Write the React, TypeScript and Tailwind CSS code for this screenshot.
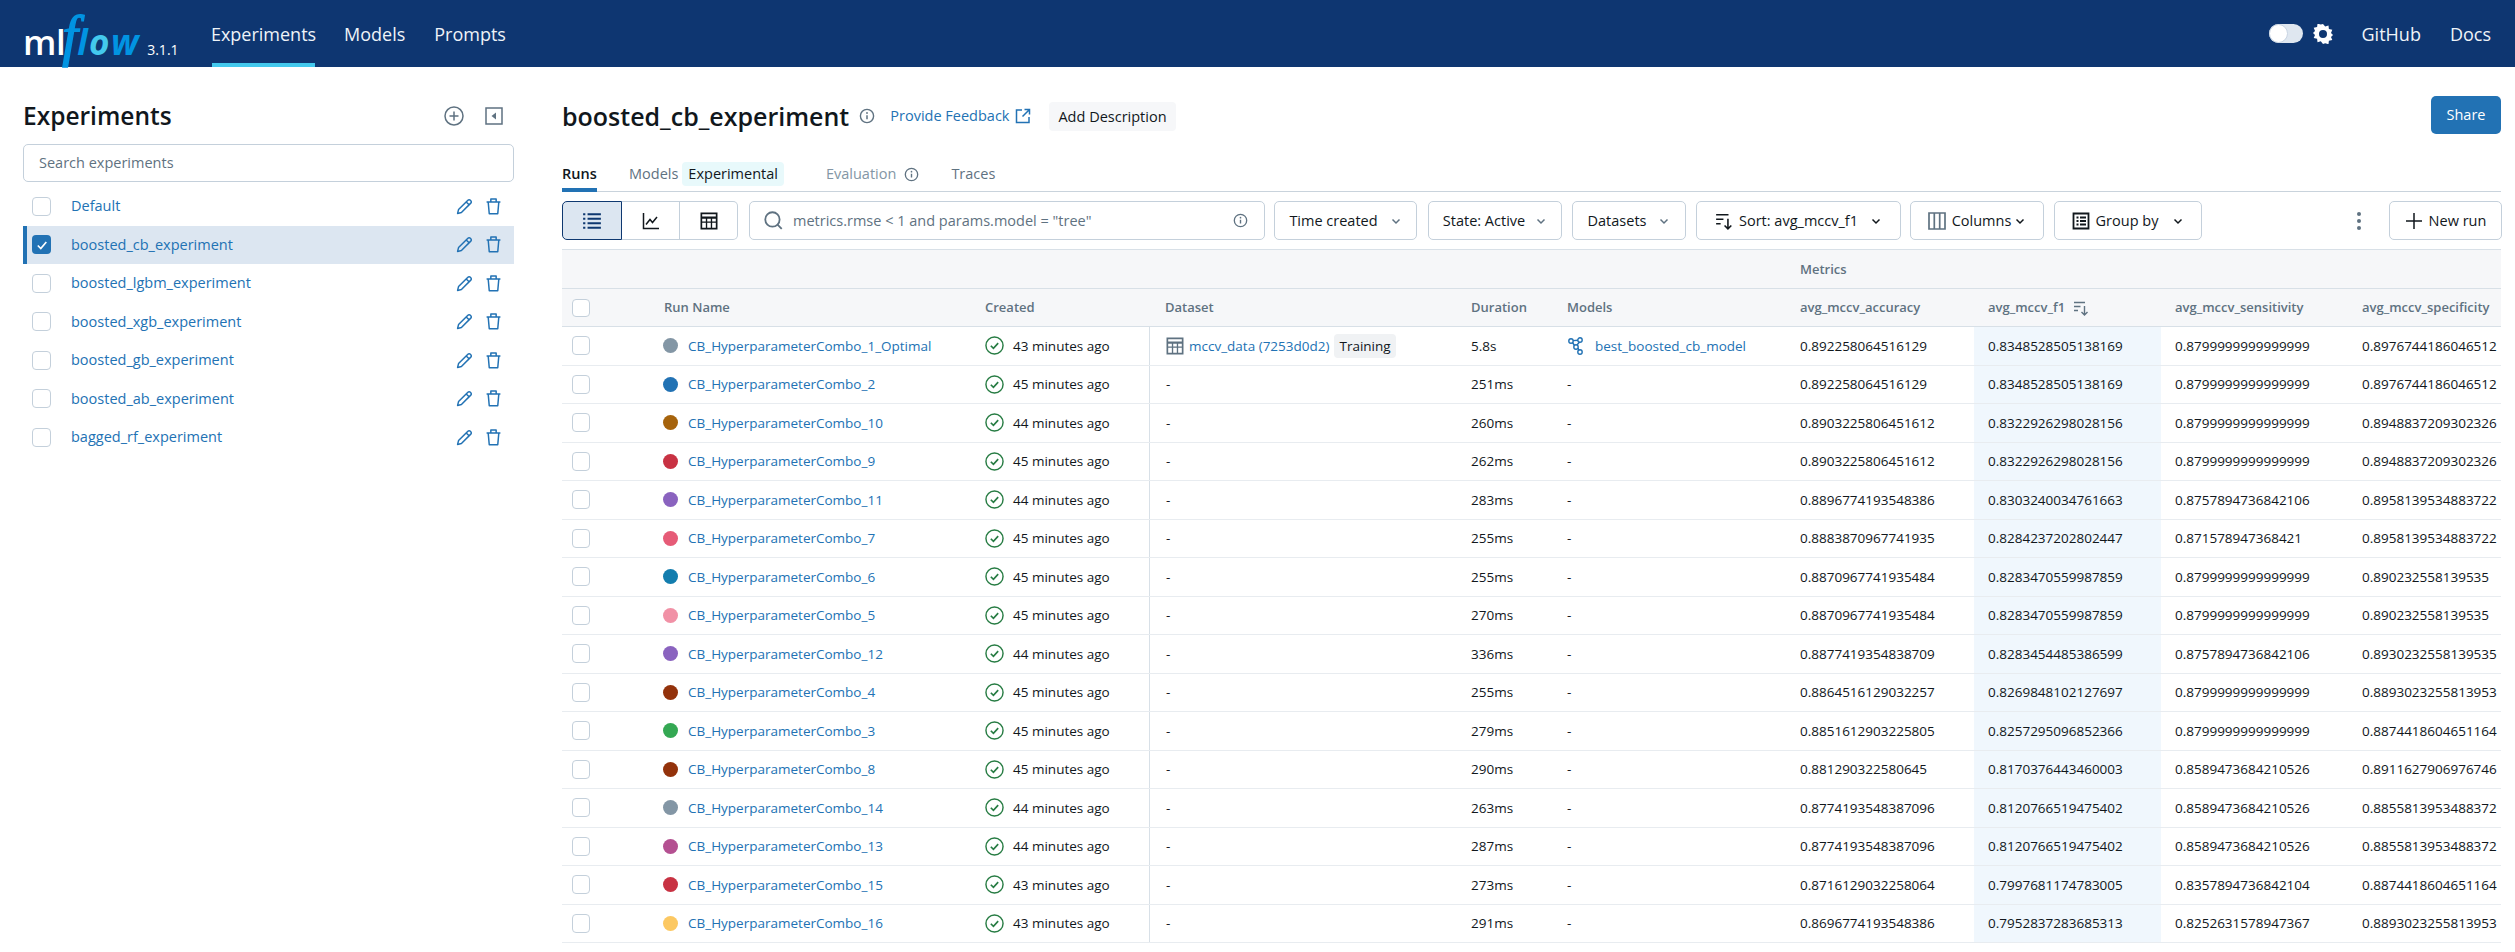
import React from "react";

const F = "font-['Open_Sans','Noto_Sans',sans-serif]";

type P = { className?: string };
const Info = ({ className = "" }: P) => (
  <svg viewBox="0 0 16 16" className={className} fill="none" stroke="currentColor" strokeWidth="1.4">
    <circle cx="8" cy="8" r="6.6" />
    <path d="M8 7.2v4" strokeWidth="1.5" />
    <circle cx="8" cy="5" r="0.9" fill="currentColor" stroke="none" />
  </svg>
);
const Pencil = () => (
  <svg viewBox="0 0 16 16" className="w-[17px] h-[17px] text-[#2272b4]" fill="none" stroke="currentColor" strokeWidth="1.4" strokeLinejoin="round">
    <path d="M1.5 14.5l.9-3.6L11.2 2.1a1.6 1.6 0 012.3 0l.4.4a1.6 1.6 0 010 2.3L5.1 13.6z" />
    <path d="M9.6 3.7l2.7 2.7" />
  </svg>
);
const Trash = () => (
  <svg viewBox="0 0 16 16" className="w-[17px] h-[17px] text-[#2272b4]" fill="none" stroke="currentColor" strokeWidth="1.4" strokeLinejoin="round">
    <path d="M1.5 3.8h13M5.5 3.8V1h5v2.8M3 3.8l1 11h8l1-11" />
  </svg>
);
const Check = () => (
  <svg viewBox="0 0 16 16" className="w-[19px] h-[19px] text-[#277c43] shrink-0" fill="none" stroke="currentColor" strokeWidth="1.2">
    <circle cx="8" cy="8" r="7.2" />
    <path d="M4.9 8.2l2.2 2.2 4-4.4" strokeWidth="1.4" />
  </svg>
);
const Chevron = ({ className = "" }: P) => (
  <svg viewBox="0 0 12 12" className={className} fill="none" stroke="currentColor" strokeWidth="1.5">
    <path d="M2.5 4.5L6 8l3.5-3.5" />
  </svg>
);
const SortIcon = ({ className = "" }: P) => (
  <svg viewBox="0 0 16 16" className={className} fill="none" stroke="currentColor" strokeWidth="1.4">
    <path d="M1 2.5h11M1 6.5h6.5M1 10.5h4M11.5 6v9M8.5 12l3 3 3-3" />
  </svg>
);
const TableIcon = ({ className = "" }: P) => (
  <svg viewBox="0 0 16 16" className={className} fill="none" stroke="currentColor" strokeWidth="1.5">
    <path d="M1.2 1.2h13.6v13.6H1.2z" />
    <path d="M1.2 5h13.6" strokeWidth="2" />
    <path d="M5.8 5v9.5M10.2 5v9.5M1.2 9h13.6" strokeWidth="1.2" />
  </svg>
);

const Logo = () => (
  <div className="flex items-baseline select-none leading-none whitespace-nowrap w-[159px] mt-[4px]">
    <span className="font-['Open_Sans',sans-serif] font-semibold text-[35px] text-white tracking-[-0.5px]">ml</span>
    <span className="font-['Open_Sans',sans-serif] italic font-bold text-[35px] text-[#0194e2] tracking-[1.5px]">
      <span className="font-['Liberation_Serif',serif] font-normal text-[56px] [-webkit-text-stroke:1.4px_#0194e2] ml-[-3px] mr-[-2px]">f</span>
      l<span className="text-[#43c9ed]">o</span>w
    </span>
    <span className={`${F} text-[14px] text-white ml-[7px] not-italic`}>3.1.1</span>
  </div>
);

const Header = () => (
  <header className={`${F} h-[67px] bg-[#0e3671] flex items-center pl-[23px] pr-[24px] text-[#eef3f8] text-[18px]`}>
    <Logo />
    <nav className="flex h-full ml-[30px] gap-[29px] items-center">
      <a className="h-full flex items-center border-b-4 border-[#43c9ed] pt-[5px] w-[103px] justify-center">Experiments</a>
      <a className="mt-[1px]">Models</a>
      <a className="mt-[1px]">Prompts</a>
    </nav>
    <div className="ml-auto flex items-center">
      <div className="w-[34px] h-[19px] rounded-full bg-[#dfe7f0] flex items-center">
        <div className="w-[19px] h-[19px] rounded-full bg-white border border-[#c8d4e2]" />
      </div>
      <svg viewBox="0 0 20 20" className="w-[20px] h-[20px] ml-[10px] text-white" fill="currentColor">
        <path fillRule="evenodd" d="M10 0l2.2 2.6 3.3-1 .4 3.5 3.4 .7-1.3 3.2 2 2-2 2 1.3 3-3.4.7-.4 3.5-3.3-1L10 20l-2.2-2.8-3.3 1-.4-3.5-3.4-.7 1.3-3-2-2 2-2-1.3-3.2 3.4-.7.4-3.5 3.3 1zM10 6a4 4 0 100 8 4 4 0 000-8z" />
      </svg>
      <a className="ml-[29px] mt-[1px]">GitHub</a>
      <a className="ml-[29px] mt-[1px]">Docs</a>
    </div>
  </header>
);

const experiments = [
  "Default",
  "boosted_cb_experiment",
  "boosted_lgbm_experiment",
  "boosted_xgb_experiment",
  "boosted_gb_experiment",
  "boosted_ab_experiment",
  "bagged_rf_experiment",
];

const Sidebar = () => (
  <aside className="w-[562px] shrink-0 pl-[23px] pr-[48px]">
    <div className="h-[77px] pt-[29px] flex items-start">
      <h1 className="text-[24.5px] leading-[40px] font-semibold text-[#11171c]">Experiments</h1>
      <div className="ml-auto flex items-center h-[40px] text-[#5f7281] pr-[11px]">
        <svg viewBox="0 0 20 20" className="w-[20px] h-[20px]" fill="none" stroke="currentColor" strokeWidth="1.5">
          <circle cx="10" cy="10" r="9" />
          <path d="M10 5.5v9M5.5 10h9" />
        </svg>
        <svg viewBox="0 0 18 18" className="w-[18px] h-[18px] ml-[21px]" fill="none" stroke="currentColor" strokeWidth="1.5">
          <path d="M1 1h16v16H1z" />
          <path d="M11 5.5v7L6.5 9z" fill="currentColor" stroke="none" />
        </svg>
      </div>
    </div>
    <div className="h-[38px] w-[491px] border border-[#c4d0db] rounded-[5px] flex items-center px-[15px] text-[14.5px] text-[#5f7281]">
      Search experiments
    </div>
    <ul className="mt-[5px] w-[491px]">
      {experiments.map((e, i) => (
        <li
          key={e}
          className={`h-[38.5px] flex items-center ${i === 1 ? "bg-[#dce6f1] border-l-4 border-[#2272b4] pl-[5px]" : "pl-[9px]"}`}
        >
          {i === 1 ? (
            <div className="w-[19px] h-[19px] rounded-[4px] bg-[#2272b4] flex items-center justify-center">
              <svg viewBox="0 0 12 12" className="w-[12px] h-[12px]" fill="none" stroke="white" strokeWidth="1.7">
                <path d="M1.8 6.5l3 3 5.5-6.5" />
              </svg>
            </div>
          ) : (
            <div className="w-[19px] h-[19px] rounded-[4px] border border-[#c4d0db] bg-white" />
          )}
          <span className="ml-[20px] text-[14.5px] text-[#2272b4]">{e}</span>
          <span className="ml-auto flex items-center gap-[12px] pr-[12px]">
            <Pencil />
            <Trash />
          </span>
        </li>
      ))}
    </ul>
  </aside>
);

const Btn = ({ w, children, ml = "ml-[10px]" }: { w: string; children: React.ReactNode; ml?: string }) => (
  <div className={`${w} ${ml} h-[39px] shrink-0 border border-[#c4d0db] rounded-[5px] flex items-center justify-center text-[14.5px] text-[#11171c] whitespace-nowrap`}>
    {children}
  </div>
);

const Toolbar = () => (
  <div className="flex items-center mt-[9px] h-[39px]">
    <div className="flex h-[39px] w-[176px] shrink-0">
      <div className="w-[60px] bg-[#dce6f1] border border-[#0e3870] rounded-l-[5px] flex items-center justify-center text-[#0e3870]">
        <svg viewBox="0 0 18 18" className="w-[20px] h-[20px]" fill="none" stroke="currentColor" strokeWidth="1.8">
          <path d="M1 3h2M5 3h12M1 7h2M5 7h12M1 11h2M5 11h12M1 15h2M5 15h12" />
        </svg>
      </div>
      <div className="w-[58px] border-y border-r border-[#c4d0db] flex items-center justify-center text-[#11171c]">
        <svg viewBox="0 0 18 18" className="w-[18px] h-[18px]" fill="none" stroke="currentColor" strokeWidth="1.5">
          <path d="M1.5 1v15.5H17" />
          <path d="M4 12.5l4-5 2.5 3L15 5" />
        </svg>
      </div>
      <div className="w-[58px] border-y border-r border-[#c4d0db] rounded-r-[5px] flex items-center justify-center text-[#11171c]">
        <TableIcon className="w-[18px] h-[18px]" />
      </div>
    </div>
    <div className="ml-[11px] w-[516px] h-[39px] shrink-0 border border-[#c4d0db] rounded-[5px] flex items-center pl-[14px] pr-[16px] text-[14.5px] text-[#5f7281]">
      <svg viewBox="0 0 18 18" className="w-[19px] h-[19px] shrink-0" fill="none" stroke="currentColor" strokeWidth="1.7">
        <circle cx="8" cy="8" r="6.8" />
        <path d="M12.8 12.8l4 4.2" />
      </svg>
      <span className="ml-[10px]">metrics.rmse &lt; 1 and params.model = "tree"</span>
      <Info className="w-[15px] h-[15px] ml-auto" />
    </div>
    <Btn w="w-[143px]" ml="ml-[9px]">Time created<Chevron className="w-[12px] h-[12px] ml-[12px] text-[#5f7281]" /></Btn>
    <Btn w="w-[134px]" ml="ml-[11px]">State: Active<Chevron className="w-[12px] h-[12px] ml-[10px] text-[#5f7281]" /></Btn>
    <Btn w="w-[114px]">Datasets<Chevron className="w-[12px] h-[12px] ml-[12px] text-[#5f7281]" /></Btn>
    <Btn w="w-[205px]"><SortIcon className="w-[18px] h-[18px] mr-[6px]" />Sort: avg_mccv_f1<Chevron className="w-[12px] h-[12px] ml-[12px]" /></Btn>
    <Btn w="w-[134px]" ml="ml-[9px]">
      <svg viewBox="0 0 18 18" className="w-[18px] h-[18px] mr-[6px] text-[#5f7281]" fill="none" stroke="currentColor" strokeWidth="1.7">
        <path d="M1 1h16v16H1zM6.3 1v16M11.7 1v16" />
      </svg>
      Columns<Chevron className="w-[12px] h-[12px] ml-[3px]" />
    </Btn>
    <Btn w="w-[148px]">
      <svg viewBox="0 0 18 18" className="w-[18px] h-[18px] mr-[6px]" fill="none" stroke="currentColor" strokeWidth="1.8">
        <path d="M1.5 1.5h15v15h-15zM4.5 5.5h2M8 5.5h6M4.5 9h2M8 9h6M4.5 12.5h2M8 12.5h6" />
      </svg>
      Group by<Chevron className="w-[12px] h-[12px] ml-[14px]" />
    </Btn>
    <div className="w-[187px] shrink-0 flex items-center justify-end pr-[28px]">
      <div className="flex flex-col gap-[3px]">
        <div className="w-[4px] h-[4px] rounded-full bg-[#5f7281]" />
        <div className="w-[4px] h-[4px] rounded-full bg-[#5f7281]" />
        <div className="w-[4px] h-[4px] rounded-full bg-[#5f7281]" />
      </div>
    </div>
    <Btn w="w-[113px]" ml="">
      <svg viewBox="0 0 18 18" className="w-[18px] h-[18px] mr-[6px]" fill="none" stroke="currentColor" strokeWidth="1.5">
        <path d="M9 1v16M1 9h16" />
      </svg>
      New run
    </Btn>
  </div>
);

type Run = [string, string, string, string, string, string, string, string];
const runs: Run[] = [
  ["1_Optimal", "#8396a5", "43", "5.8s", "0.892258064516129", "0.8348528505138169", "0.8799999999999999", "0.8976744186046512"],
  ["2", "#2272b4", "45", "251ms", "0.892258064516129", "0.8348528505138169", "0.8799999999999999", "0.8976744186046512"],
  ["10", "#a6630c", "44", "260ms", "0.8903225806451612", "0.8322926298028156", "0.8799999999999999", "0.8948837209302326"],
  ["9", "#c83243", "45", "262ms", "0.8903225806451612", "0.8322926298028156", "0.8799999999999999", "0.8948837209302326"],
  ["11", "#8a63bf", "44", "283ms", "0.8896774193548386", "0.8303240034761663", "0.8757894736842106", "0.8958139534883722"],
  ["7", "#e65b77", "45", "255ms", "0.8883870967741935", "0.8284237202802447", "0.871578947368421", "0.8958139534883722"],
  ["6", "#137dae", "45", "255ms", "0.8870967741935484", "0.8283470559987859", "0.8799999999999999", "0.890232558139535"],
  ["5", "#f191a6", "45", "270ms", "0.8870967741935484", "0.8283470559987859", "0.8799999999999999", "0.890232558139535"],
  ["12", "#8a63bf", "44", "336ms", "0.8877419354838709", "0.8283454485386599", "0.8757894736842106", "0.8930232558139535"],
  ["4", "#93320b", "45", "255ms", "0.8864516129032257", "0.8269848102127697", "0.8799999999999999", "0.8893023255813953"],
  ["3", "#34a853", "45", "279ms", "0.8851612903225805", "0.8257295096852366", "0.8799999999999999", "0.8874418604651164"],
  ["8", "#93320b", "45", "290ms", "0.881290322580645", "0.8170376443460003", "0.8589473684210526", "0.8911627906976746"],
  ["14", "#8396a5", "44", "263ms", "0.8774193548387096", "0.8120766519475402", "0.8589473684210526", "0.8855813953488372"],
  ["13", "#b45091", "44", "287ms", "0.8774193548387096", "0.8120766519475402", "0.8589473684210526", "0.8855813953488372"],
  ["15", "#c83243", "43", "273ms", "0.8716129032258064", "0.7997681174783005", "0.8357894736842104", "0.8874418604651164"],
  ["16", "#fcc862", "43", "291ms", "0.8696774193548386", "0.7952837283685313", "0.8252631578947367", "0.8893023255813953"],
];

const Table = () => (
  <div className="mt-[9px] w-[1939px] text-[13.5px]">
    <div className="bg-[#f6f7f9] border-y border-[#d8e0e7] h-[40px] flex items-center pt-[2px]">
      <div className="w-[1238px] shrink-0" />
      <span className="text-[#5f7281] font-semibold text-[13px]">Metrics</span>
    </div>
    <div className="bg-[#f6f7f9] border-b border-[#d8e0e7] h-[38px] flex items-center text-[#5f7281] font-semibold text-[13px] pt-[1px]">
      <div className="w-[102px] shrink-0 pl-[10px]">
        <div className="w-[18px] h-[18px] rounded-[4px] border border-[#c4d0db] bg-white" />
      </div>
      <div className="w-[321px] shrink-0">Run Name</div>
      <div className="w-[180px] shrink-0">Created</div>
      <div className="w-[306px] shrink-0">Dataset</div>
      <div className="w-[96px] shrink-0">Duration</div>
      <div className="w-[233px] shrink-0">Models</div>
      <div className="w-[188px] shrink-0">avg_mccv_accuracy</div>
      <div className="w-[187px] shrink-0 flex items-center">avg_mccv_f1<SortIcon className="w-[16px] h-[16px] ml-[8px]" /></div>
      <div className="w-[187px] shrink-0">avg_mccv_sensitivity</div>
      <div className="shrink-0 whitespace-nowrap">avg_mccv_specificity</div>
    </div>
    {runs.map((r, i) => (
      <div key={r[0]} className="h-[38.5px] flex items-stretch border-b border-[#e8ecf0] text-[#11171c]">
        <div className="w-[102px] shrink-0 pl-[10px] flex items-center">
          <div className="w-[18px] h-[19px] rounded-[4px] border border-[#c4d0db] bg-white" />
        </div>
        <div className="w-[321px] shrink-0 flex items-center ml-[-1px] mr-[1px]">
          <span className="w-[15px] h-[15px] rounded-full shrink-0" style={{ backgroundColor: r[1] }} />
          <span className="ml-[10px] text-[#2272b4] whitespace-nowrap">CB_HyperparameterCombo_{r[0]}</span>
        </div>
        <div className="w-[164px] shrink-0 flex items-center">
          <Check />
          <span className="ml-[9px] whitespace-nowrap">{r[2]} minutes ago</span>
        </div>
        <div className="w-[322px] shrink-0 flex items-center border-l border-[#d8e0e7] pl-[16px]">
          {i === 0 ? (
            <>
              <TableIcon className="w-[18px] h-[18px] text-[#5f7281] shrink-0" />
              <span className="ml-[5px] text-[#2272b4] whitespace-nowrap">mccv_data (7253d0d2)</span>
              <span className="ml-[5px] h-[24px] px-[5px] rounded-[4px] bg-[#f0f2f4] flex items-center whitespace-nowrap">Training</span>
            </>
          ) : (
            "-"
          )}
        </div>
        <div className="w-[96px] shrink-0 flex items-center">{r[3]}</div>
        <div className="w-[233px] shrink-0 flex items-center">
          {i === 0 ? (
            <>
              <svg viewBox="0 0 18 18" className="w-[18px] h-[18px] text-[#2272b4] shrink-0" fill="none" stroke="currentColor" strokeWidth="1.4">
                <circle cx="4" cy="4" r="2.2" />
                <circle cx="13" cy="3" r="2.2" />
                <circle cx="9" cy="10" r="2.2" />
                <circle cx="13" cy="15" r="2.2" />
                <path d="M5.5 5.5l2 3M11 11l1 2.5M10 8l2.5-3M6 3.6l5-.4" />
              </svg>
              <span className="ml-[10px] text-[#2272b4] whitespace-nowrap">best_boosted_cb_model</span>
            </>
          ) : (
            "-"
          )}
        </div>
        <div className="w-[174px] shrink-0 flex items-center">{r[4]}</div>
        <div className="w-[187px] shrink-0 flex items-center bg-[#f0f7fd] pl-[14px]">{r[5]}</div>
        <div className="w-[187px] shrink-0 flex items-center pl-[14px]">{r[6]}</div>
        <div className="shrink-0 flex items-center pl-[14px] whitespace-nowrap">{r[7]}</div>
      </div>
    ))}
  </div>
);

const Main = () => (
  <main className="w-[1939px] shrink-0 text-[#11171c]">
    <div className="h-[89px] pt-[29px] flex items-start">
      <h2 className="text-[25px] leading-[40px] font-semibold">boosted_cb_experiment</h2>
      <Info className="w-[16px] h-[16px] text-[#5f7281] ml-[10px] mt-[12px]" />
      <a className="ml-[15px] mt-[9px] text-[14.5px] text-[#2272b4] flex items-center">
        Provide Feedback
        <svg viewBox="0 0 16 16" className="w-[16px] h-[16px] ml-[6px]" fill="none" stroke="currentColor" strokeWidth="1.5">
          <path d="M7 2H1.5v12.5H14V9M9.5 1.5H14.5V6.5M14.5 1.5L7.5 8.5" />
        </svg>
      </a>
      <span className="ml-[18px] mt-[6px] h-[29px] px-[9px] rounded-[4px] bg-[#f6f7f9] text-[14.5px] flex items-center">Add Description</span>
      <button className="ml-auto w-[70px] h-[38px] bg-[#2272b4] rounded-[5px] text-white text-[14.5px]">Share</button>
    </div>
    <div className="h-[36px] border-b border-[#c9d3dc] flex items-start text-[14.5px] pt-[7px]">
      <a className="h-[29px] w-[35px] border-b-4 border-[#2272b4] font-semibold">Runs</a>
      <a className="ml-[32px] text-[#5f7281]">Models</a>
      <span className="ml-[4px] h-[24px] mt-[-1px] px-[6px] rounded-[4px] bg-[#e8f9fb] flex items-center">Experimental</span>
      <a className="ml-[42px] text-[#8396a5]">Evaluation</a>
      <Info className="w-[15px] h-[15px] text-[#5f7281] ml-[8px] mt-[4px]" />
      <a className="ml-[32px] text-[#5f7281]">Traces</a>
    </div>
    <Toolbar />
    <Table />
  </main>
);

export default function App() {
  return (
    <div className={`${F} w-[2515px] h-[952px] overflow-hidden bg-white`}>
      <Header />
      <div className="flex">
        <Sidebar />
        <Main />
      </div>
    </div>
  );
}
